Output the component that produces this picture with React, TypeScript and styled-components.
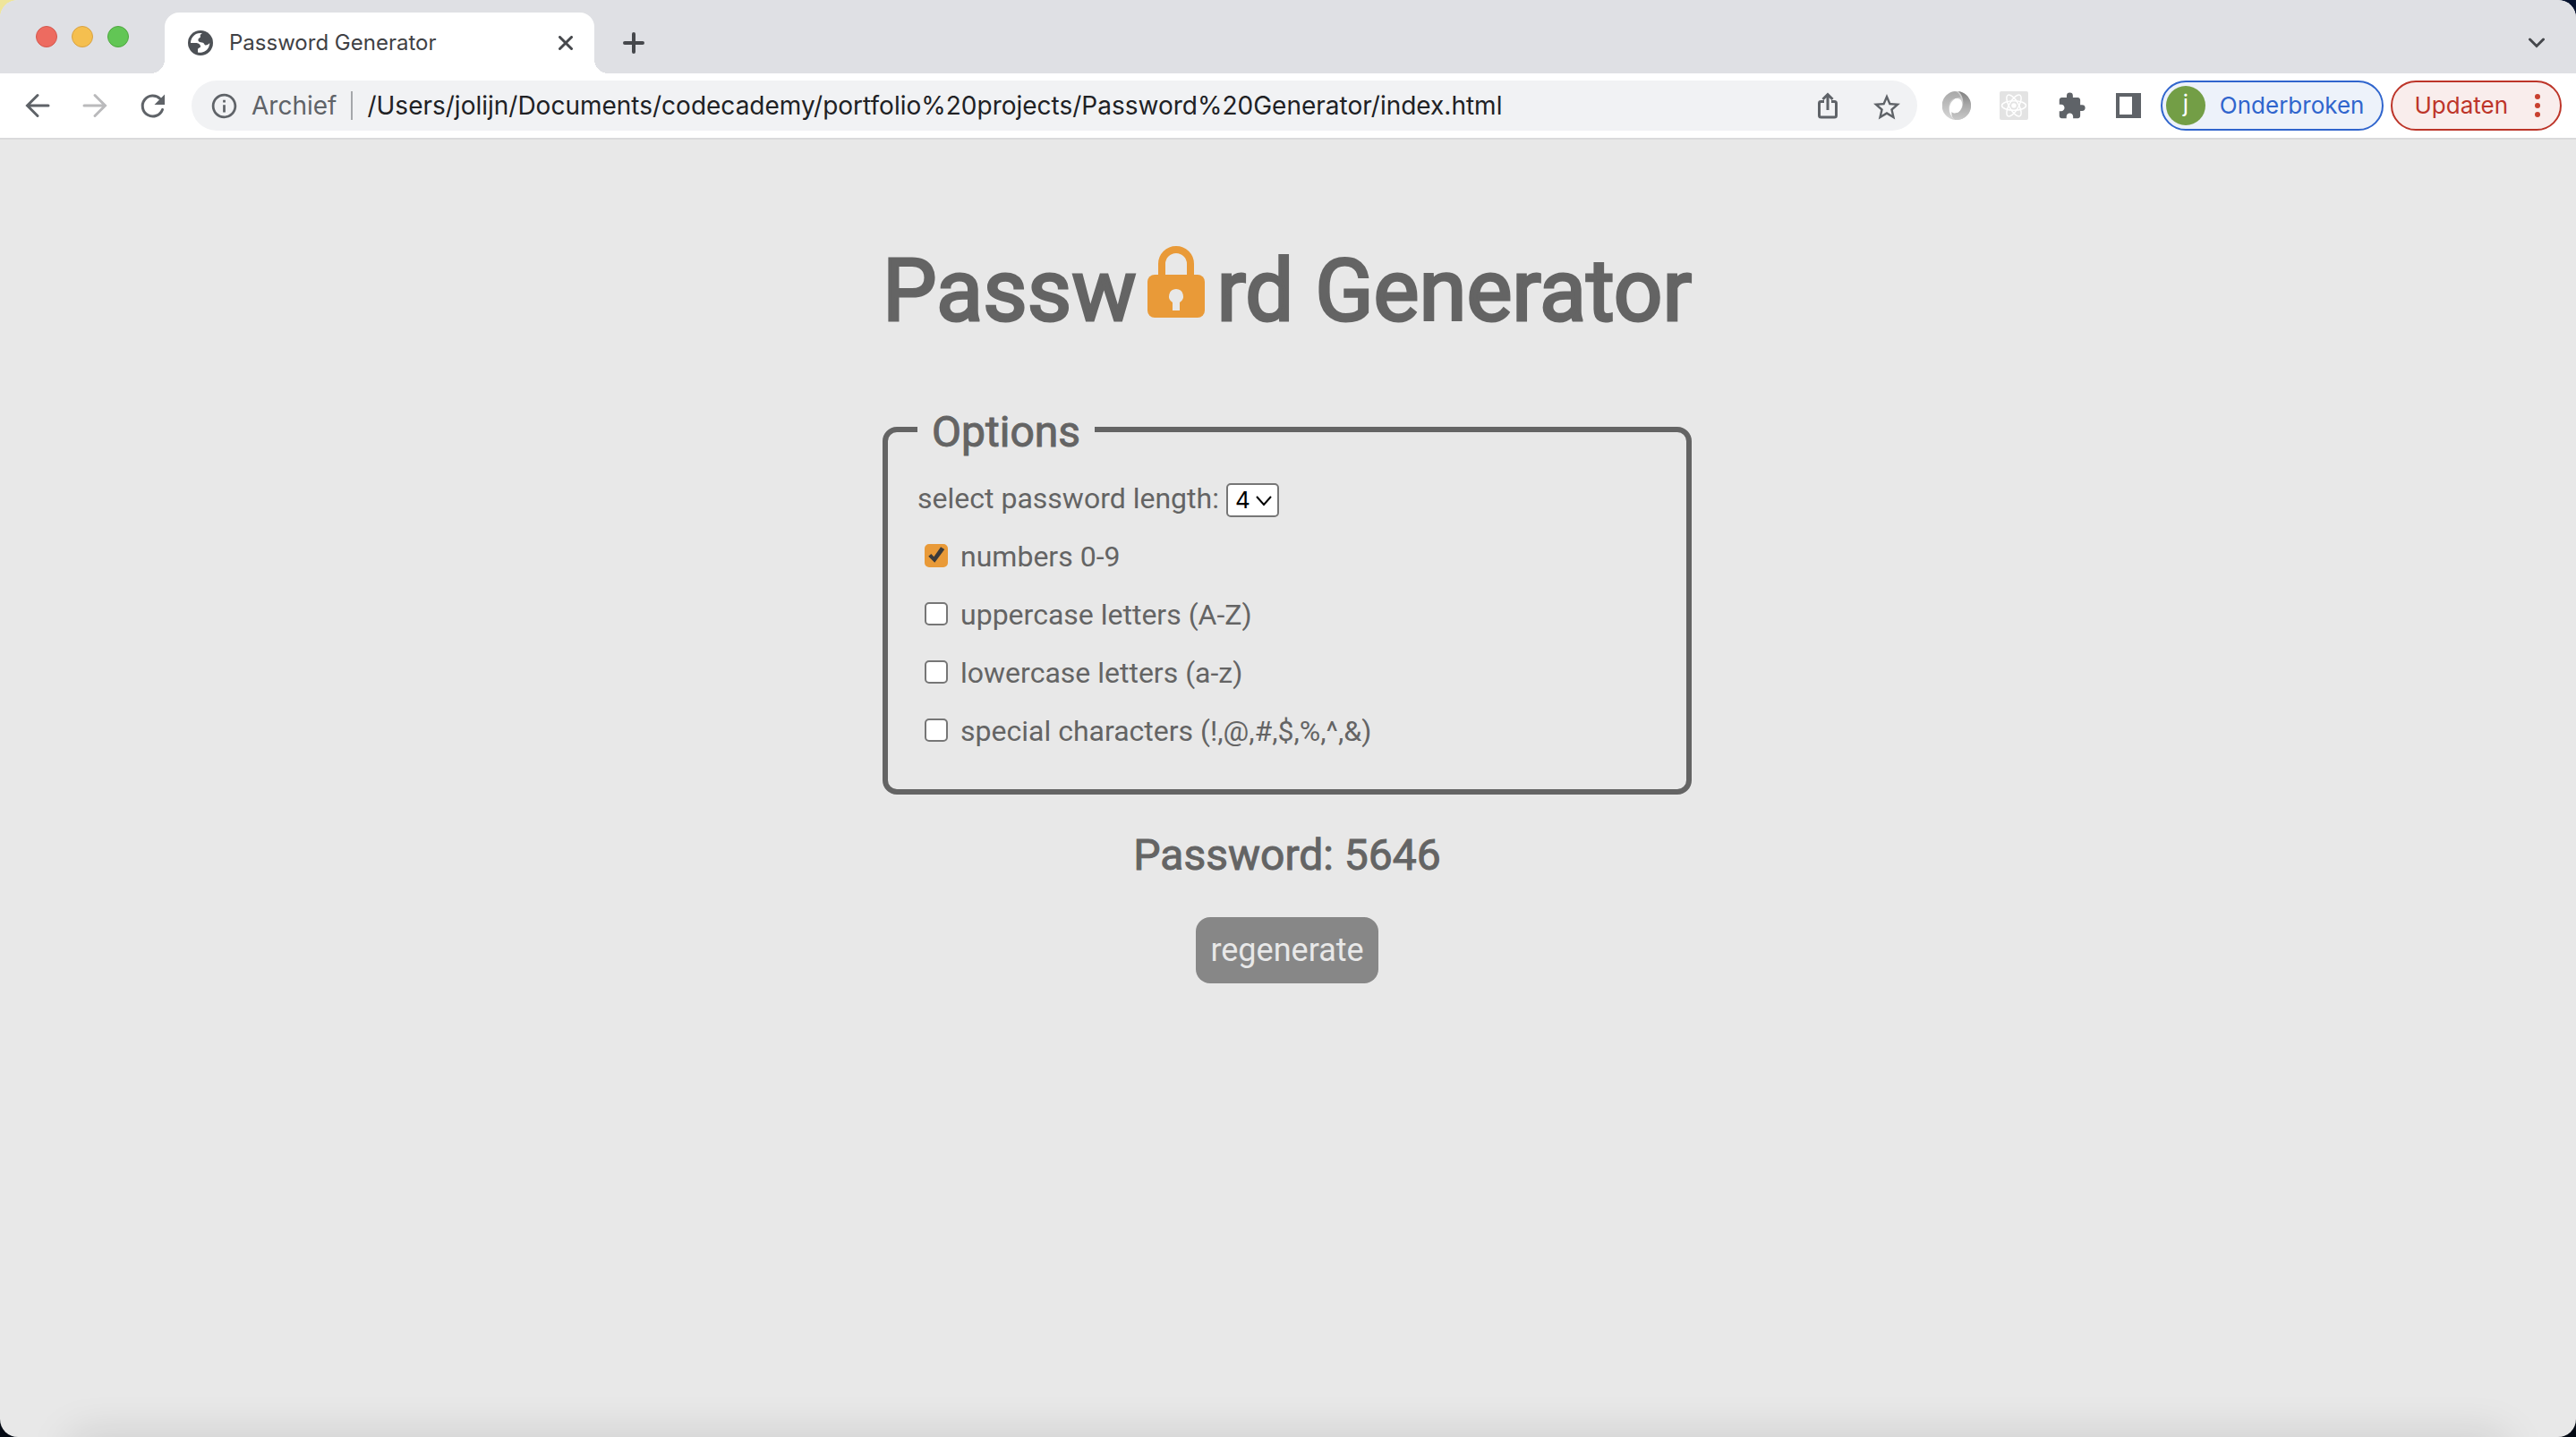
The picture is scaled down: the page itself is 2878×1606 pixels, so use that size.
import React, { useState } from 'react';
import styled, { createGlobalStyle } from 'styled-components';
import { MdExtension, MdInfoOutline, MdStarBorder } from 'react-icons/md';

const ui = 'Inter, "Liberation Sans", sans-serif';
const ink = '#646464';
const paper = '#e8e8e8';
const accent = '#e99a38';

const GlobalStyle = createGlobalStyle`
  *, *::before, *::after { box-sizing: border-box; }
  html { background: linear-gradient(90deg, #efe59a 50%, #06122e 50%) top / 100% 50% no-repeat #040a14; }
  body { margin: 0; font-family: Roboto, sans-serif; color: ${ink}; }
  button { font: inherit; border: 0; padding: 0; background: none; color: inherit; cursor: pointer; }
  svg { display: block; flex: none; }
`;

const BrowserWindow = styled.div`
  display: flex;
  flex-direction: column;
  min-height: 100vh;
  border-radius: 20px;
  overflow: hidden;
  background: ${paper};
`;

const TabStrip = styled.header`
  display: flex;
  align-items: stretch;
  height: 82px;
  padding: 14px 35px 0 40px;
  background: #dfe0e4;
  color: #46484c;
  font-family: ${ui};
`;

const TrafficLights = styled.div`
  display: flex;
  gap: 16px;
  padding-top: 15px;
  width: 144px;
`;

const Light = styled.button<{ $fill: string; $edge: string }>`
  width: 24px;
  height: 24px;
  border-radius: 50%;
  background: ${(p) => p.$fill};
  border: 1px solid ${(p) => p.$edge};
`;

const Tab = styled.div`
  position: relative;
  display: flex;
  align-items: center;
  width: 480px;
  padding: 0 24px 0 26px;
  border-radius: 16px 16px 0 0;
  background: #fff;
  &::before, &::after {
    content: '';
    position: absolute;
    bottom: 0;
    width: 16px;
    height: 16px;
  }
  &::before { right: 100%; background: radial-gradient(circle at 0 0, transparent 16px, #fff 16px); }
  &::after { left: 100%; background: radial-gradient(circle at 100% 0, transparent 16px, #fff 16px); }
`;

const TabTitle = styled.span`
  flex: 1;
  margin-left: 18px;
  font-size: 24px;
  line-height: 28px;
  color: #3f4145;
`;

const StripButton = styled.button<{ $push?: boolean }>`
  display: flex;
  align-items: center;
  margin-left: ${(p) => (p.$push ? 'auto' : '32px')};
`;

const Toolbar = styled.nav`
  display: flex;
  align-items: center;
  height: 74px;
  padding: 0 16px 0 26px;
  background: #fff;
  border-bottom: 2px solid #dadadb;
  color: #5f6368;
  font-family: ${ui};
  font-size: 28px;
  line-height: 34px;
`;

const NavButtons = styled.div`
  display: flex;
  gap: 32px;
  width: 188px;
`;

const IconButton = styled.button<{ $faded?: boolean }>`
  display: grid;
  place-items: center;
  width: 32px;
  height: 32px;
  color: ${(p) => (p.$faded ? '#bababc' : '#5f6368')};
`;

const AddressBar = styled.div`
  display: flex;
  align-items: center;
  flex: 1;
  height: 56px;
  padding: 0 20px;
  border-radius: 28px;
  background: #f1f2f4;
`;

const Scheme = styled.span`
  margin-left: 14px;
  padding-right: 16px;
  border-right: 2px solid #a5a7aa;
  line-height: 32px;
`;

const UrlInput = styled.input`
  flex: 1;
  min-width: 0;
  border: 0;
  padding: 0 0 0 16px;
  background: none;
  font: inherit;
  color: #202124;
  outline: none;
`;

const IconRow = styled.div`
  display: flex;
  gap: 32px;
`;

const Extensions = styled(IconRow)`
  margin: 0 20px 0 28px;
`;

const Pill = styled.button<{ $tone: string; $tint: string }>`
  display: flex;
  align-items: center;
  height: 56px;
  border: 2px solid ${(p) => p.$tone};
  border-radius: 28px;
  background: ${(p) => p.$tint};
  color: ${(p) => p.$tone};
  font-size: 26px;
`;

const ProfilePill = styled(Pill)`
  gap: 16px;
  padding: 0 20px 0 4px;
  margin-right: 8px;
`;

const UpdatePill = styled(Pill)`
  gap: 30px;
  padding: 0 22px 0 24px;
`;

const Avatar = styled.span`
  width: 44px;
  height: 44px;
  border-radius: 50%;
  background: #739e46;
  color: #fff;
  line-height: 40px;
  text-align: center;
`;

const Page = styled.main`
  flex: 1;
  display: flex;
  flex-direction: column;
  align-items: center;
  padding-top: 113px;
  &::after {
    content: '';
    align-self: stretch;
    margin: auto 100px 0;
    box-shadow: 0 20px 50px 20px rgba(0, 0, 0, 0.14);
  }
`;

const Content = styled.div`
  display: flex;
  flex-direction: column;
  align-items: center;
  margin-right: 2px;
`;

const Heading = styled.h1`
  display: flex;
  align-items: flex-start;
  margin: 0;
  font-size: 96px;
  line-height: 112px;
  font-weight: 400;
  -webkit-text-stroke: 3px ${ink};
`;

const LockIcon = styled.svg`
  width: 64px;
  height: 80px;
  margin: 6px 14px 0 12px;
`;

const Options = styled.fieldset`
  align-self: stretch;
  margin: 68px 0 0;
  border: 6px solid ${ink};
  border-radius: 16px;
  padding: 13px 33px 33px;
  font-size: 32px;
  line-height: 38px;
`;

const Legend = styled.legend`
  padding: 6px 16px 0;
  font-size: 48px;
  line-height: 56px;
  -webkit-text-stroke: 1px ${ink};
`;

const OptionRow = styled.div`
  display: flex;
  align-items: center;
  height: 65px;
`;

const LengthBox = styled.span`
  position: relative;
  display: flex;
  margin: 4px 0 0 8px;
`;

const LengthSelect = styled.select`
  appearance: none;
  width: 59px;
  height: 38px;
  padding: 0 8px;
  border: 2px solid #767676;
  border-radius: 5px;
  background: #fff;
  color: #000;
  font-family: ${ui};
  font-size: 26px;
`;

const Chevron = styled.svg`
  position: absolute;
  right: 8px;
  top: 14px;
  pointer-events: none;
`;

const Check = styled.input`
  appearance: none;
  display: grid;
  place-items: center;
  width: 26px;
  height: 26px;
  margin: 0 14px 2px 8px;
  border: 2px solid #767676;
  border-radius: 5px;
  background: #fff;
  &:checked {
    border-color: ${accent};
    background: ${accent};
  }
  &:checked::before {
    content: '';
    width: 22px;
    height: 22px;
    background: #3b3b3b;
    clip-path: polygon(10% 56%, 24% 43%, 38% 58%, 73% 8%, 92% 20%, 42% 88%);
  }
`;

const Result = styled.h2`
  margin: 40px 0 0;
  font-size: 48px;
  line-height: 56px;
  font-weight: 400;
  -webkit-text-stroke: 1px ${ink};
`;

const Regenerate = styled.button`
  height: 74px;
  margin-top: 41px;
  padding: 0 16px;
  border-radius: 16px;
  background: #878787;
  color: ${paper};
  font-size: 36px;
  line-height: 42px;
`;

const Globe = () => (
  <svg width="28" height="28" viewBox="0 0 28 28">
    <circle cx="14" cy="14" r="14" fill="#4d5156" />
    <path d="M16 3.200c-2 1-2.600 2-2.200 3.300.6 2-1.800 1.500-2.300 3.500-.3 1.600.3 2.600 1.700 3l3.500.8c1.500.4 1.300 2.200 2.600 2.600 1.500.5 3.800-1 5-2.400A11 11 0 0 1 11 24.600v-3.100c0-2.500 3-1.500 3-3.500 0-2.800-2.800-4-5.500-4H3A11 11 0 0 1 16 3.200z" fill="#fff" />
  </svg>
);

const Share = () => (
  <svg width="24" height="32" viewBox="0 0 24 32" fill="none" stroke="currentColor" strokeWidth="3">
    <path d="M8 11.500H4.500a2 2 0 0 0-2 2V27a2 2 0 0 0 2 2h15a2 2 0 0 0 2-2V13.500a2 2 0 0 0-2-2H16M12 21V4M6.500 9 12 3.500 17.500 9" />
  </svg>
);

const Swirl = () => (
  <svg width="32" height="32" viewBox="0 0 32 32">
    <defs>
      <linearGradient id="swirlLeft" x1="0" y1="0" x2="0" y2="1">
        <stop offset="0" stopColor="#8f8f8f" />
        <stop offset="0.5" stopColor="#b4b4b4" />
        <stop offset="1" stopColor="#dedede" />
      </linearGradient>
      <linearGradient id="swirlRight" x1="0" y1="1" x2="0" y2="0">
        <stop offset="0" stopColor="#c9c9c9" />
        <stop offset="0.5" stopColor="#a9a9a9" />
        <stop offset="1" stopColor="#808080" />
      </linearGradient>
    </defs>
    <path d="M16 0A16 16 0 0 0 14 31.900C8 27 6 20 8 14 9 10 12 8 16 8c5 0 7 4 6 9-1 4-4 7-7 7-2 3-1 6 1 8A16 16 0 0 0 16 0z" fill="#cdcdcd" />
    <path d="M14 0A16 16 0 0 0 12 31.500C6 24 6 12 16 7.500c2-1 4-.5 5 .5C20 4 18 1 14 0z" fill="url(#swirlLeft)" opacity="0.600" />
    <path d="M18 0A16 16 0 0 1 14 31.900C11 30 10 27 10.500 23c2 2 5 2 8 0 6-4 7-16-.5-23z" fill="url(#swirlRight)" />
    <ellipse cx="16" cy="16" rx="5" ry="8" fill="#fff" />
  </svg>
);

const Atom = () => (
  <svg width="32" height="32" viewBox="0 0 32 32" fill="none" stroke="#fff" strokeWidth="1.500">
    <rect width="32" height="32" rx="2" fill="#e3e3e3" stroke="none" />
    <circle cx="16" cy="16" r="2.800" fill="#fff" stroke="none" />
    {[0, 60, 120].map((a) => (
      <ellipse key={a} cx="16" cy="16" rx="13.500" ry="5.200" transform={`rotate(${a} 16 16)`} />
    ))}
  </svg>
);

const options = ['numbers 0-9', 'uppercase letters (A-Z)', 'lowercase letters (a-z)', 'special characters (!,@,#,$,%,^,&)'];

export default function App() {
  const [checked, setChecked] = useState([true, false, false, false]);
  const [length, setLength] = useState(4);
  const [password, setPassword] = useState('5646');

  const regenerate = () => {
    const sets = ['0123456789', 'ABCDEFGHIJKLMNOPQRSTUVWXYZ', 'abcdefghijklmnopqrstuvwxyz', '!@#$%^&'];
    const pool = sets.filter((_, i) => checked[i]).join('');
    setPassword(Array.from({ length }, () => pool.charAt(Math.floor(Math.random() * pool.length))).join(''));
  };

  return (
    <BrowserWindow>
      <GlobalStyle />
      <TabStrip>
        <TrafficLights>
          <Light $fill="#ed6b60" $edge="#d4574d" aria-label="Close window" />
          <Light $fill="#f5bf4f" $edge="#d8a243" aria-label="Minimise" />
          <Light $fill="#62c655" $edge="#4fa73f" aria-label="Zoom" />
        </TrafficLights>
        <Tab>
          <Globe />
          <TabTitle>Password Generator</TabTitle>
          <button aria-label="Close tab">
            <svg width="16" height="16" viewBox="0 0 16 16" stroke="#46484c" strokeWidth="3" strokeLinecap="round"><path d="M1.500 1.500l13 13M14.500 1.500l-13 13" /></svg>
          </button>
        </Tab>
        <StripButton aria-label="New tab">
          <svg width="24" height="24" viewBox="0 0 24 24" stroke="#46484c" strokeWidth="4" strokeLinecap="round"><path d="M12 2v20M2 12h20" /></svg>
        </StripButton>
        <StripButton $push aria-label="Search tabs">
          <svg width="18" height="12" viewBox="0 0 18 12" fill="none" stroke="#46484c" strokeWidth="3" strokeLinecap="round"><path d="M1.500 2L9 9.500 16.500 2" /></svg>
        </StripButton>
      </TabStrip>

      <Toolbar>
        <NavButtons>
          <IconButton aria-label="Back">
            <svg width="32" height="32" viewBox="0 0 32 32" fill="none" stroke="currentColor" strokeWidth="3" strokeLinecap="round"><path d="M28 16H5M16 4.500L4.500 16 16 27.500" /></svg>
          </IconButton>
          <IconButton $faded aria-label="Forward">
            <svg width="32" height="32" viewBox="0 0 32 32" fill="none" stroke="currentColor" strokeWidth="3" strokeLinecap="round"><path d="M4 16h23M16 4.500L27.500 16 16 27.500" /></svg>
          </IconButton>
          <IconButton aria-label="Reload">
            <svg width="32" height="32" viewBox="0 0 32 32" fill="none" stroke="currentColor" strokeWidth="3" strokeLinecap="round">
              <path d="M27.500 20.500A11.500 11.500 0 1 1 25 8.500" />
              <path d="M30 3.500V15H18.500z" fill="currentColor" stroke="none" />
            </svg>
          </IconButton>
        </NavButtons>
        <AddressBar>
          <MdInfoOutline size={33} />
          <Scheme>Archief</Scheme>
          <UrlInput aria-label="Address" defaultValue="/Users/jolijn/Documents/codecademy/portfolio%20projects/Password%20Generator/index.html" />
          <IconRow>
            <IconButton aria-label="Share"><Share /></IconButton>
            <IconButton aria-label="Bookmark"><MdStarBorder size={36} /></IconButton>
          </IconRow>
        </AddressBar>
        <Extensions>
          <IconButton aria-label="JSON viewer"><Swirl /></IconButton>
          <IconButton aria-label="React tools"><Atom /></IconButton>
          <IconButton aria-label="Extensions"><MdExtension size={33} /></IconButton>
          <IconButton aria-label="Side panel">
            <svg width="28" height="32" viewBox="0 0 28 32"><path fillRule="evenodd" d="M0 2h28v28H0zM4 6v20h14V6z" fill="currentColor" /></svg>
          </IconButton>
        </Extensions>
        <ProfilePill $tone="#3065cd" $tint="#edf2fa">
          <Avatar>j</Avatar>
          Onderbroken
        </ProfilePill>
        <UpdatePill $tone="#bd3529" $tint="#f9edec">
          Updaten
          <svg width="6" height="26" viewBox="0 0 6 26" fill="#c8402f"><circle cx="3" cy="3" r="3" /><circle cx="3" cy="13" r="3" /><circle cx="3" cy="23" r="3" /></svg>
        </UpdatePill>
      </Toolbar>

      <Page>
        <Content>
          <Heading>
            Passw
            <LockIcon viewBox="0 0 64 80" role="img" aria-label="o">
              <path d="M16 36V20a16 16 0 0 1 32 0v16" fill="none" stroke={accent} strokeWidth="8" />
              <rect y="32" width="64" height="48" rx="8" fill={accent} />
              <path d="M32 48a8 8 0 0 1 4 14.900V72h-8v-9.100A8 8 0 0 1 32 48z" fill={paper} />
            </LockIcon>
            rd Generator
          </Heading>
          <Options>
            <Legend>Options</Legend>
            <OptionRow>
              <label htmlFor="length">select password length:</label>
              <LengthBox>
                <LengthSelect id="length" value={length} onChange={(e) => setLength(Number(e.target.value))}>
                  {[4, 5, 6, 7, 8, 9].map((n) => <option key={n}>{n}</option>)}
                </LengthSelect>
                <Chevron width="18" height="12" viewBox="0 0 18 12" fill="none" stroke="#000" strokeWidth="2"><path d="M1 1l8 9 8-9" /></Chevron>
              </LengthBox>
            </OptionRow>
            {options.map((text, i) => (
              <OptionRow key={text}>
                <Check
                  type="checkbox"
                  id={`option-${i}`}
                  checked={checked[i]}
                  onChange={() => setChecked(checked.map((c, j) => (j === i ? !c : c)))}
                />
                <label htmlFor={`option-${i}`}>{text}</label>
              </OptionRow>
            ))}
          </Options>
          <Result>Password: {password}</Result>
          <Regenerate onClick={regenerate}>regenerate</Regenerate>
        </Content>
      </Page>
    </BrowserWindow>
  );
}
